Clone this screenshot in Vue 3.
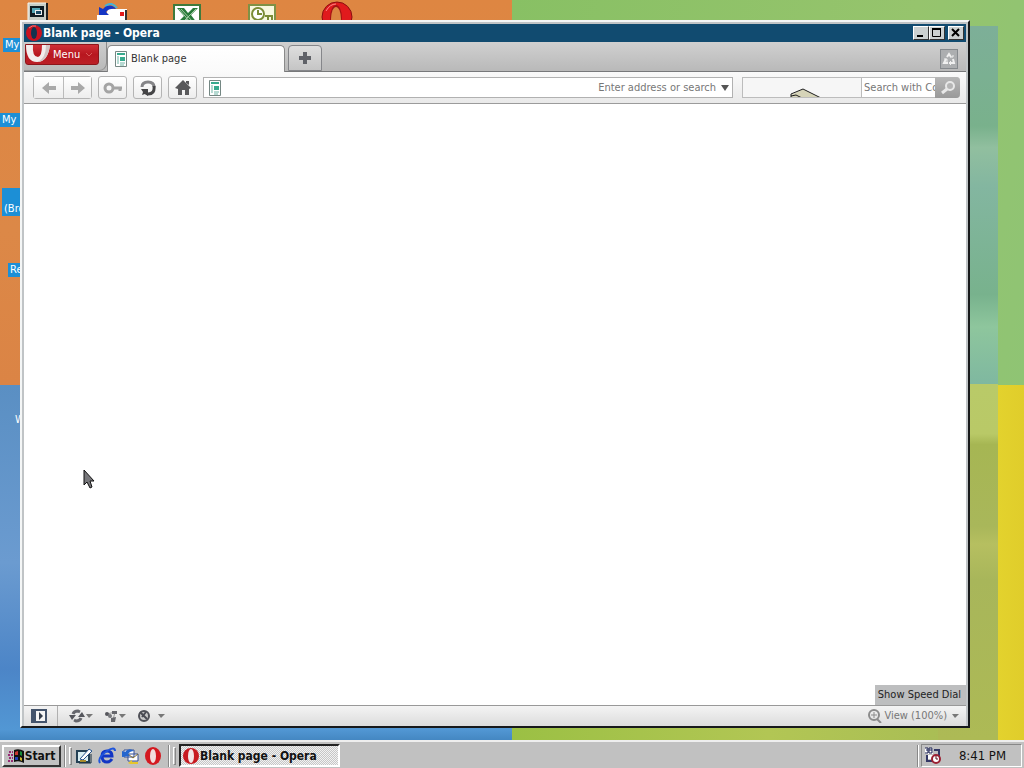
<script setup>
import { ref } from 'vue'

const address = ref('')
const query = ref('')
const shortcuts = [
  { id: 'computer', text: 'My', cls: 'lb-computer' },
  { id: 'network', text: 'My I', cls: 'lb-network' },
  { id: 'brother', text: '(Bro', cls: 'lb-brother' },
  { id: 'recycle', text: 'Rec', cls: 'lb-recycle' },
  { id: 'word', text: 'W', cls: 'lb-word' },
]
</script>

<template>
  <div class="screen">
    <main class="desktop">
      <div class="wallpaper" aria-hidden="true">
        <div class="orange"></div>
        <div class="green"></div>
        <div class="blue"></div>
        <div class="lime"></div>
      </div>
      <div class="shade" aria-hidden="true"><div class="teal"></div><div class="olive"></div></div>

      <svg class="dicon d1" width="22" height="22" viewBox="0 0 22 22">
        <path d="M1 1H19V18H1Z" fill="#c9cec6" /><path d="M1 18V1H19" fill="none" stroke="#f6f6ef" />
        <path d="M20 1V18" stroke="#222" stroke-width="2" /><path d="M3 4H17V15H3Z" fill="#101c22" />
        <path d="M5 6H13V11H5Z" fill="#54a6b5" /><path d="M8 8H15V13H8Z" fill="#eee" /><path d="M9 9H14V12H9Z" fill="#174a65" />
      </svg>
      <svg class="dicon d2" width="32" height="22" viewBox="0 0 32 22">
        <path d="M12 6H31V22H1V12H10Z" fill="#fff" /><path d="M30 7V22" stroke="#333" stroke-width="2" />
        <path d="M24 9H28V13H24Z" fill="#e21b1b" /><path d="M3 4V12H13L10 9Q13 5 20 6Q17 1 10 3L7 6Z" fill="#1535c4" />
        <path d="M9 3Q16-2 21 5" fill="none" stroke="#48b2d4" stroke-width="2" />
      </svg>
      <svg class="dicon d3" width="30" height="22" viewBox="0 0 30 22">
        <path d="M1 2H27V22H1Z" fill="#fff" stroke="#3f7a3c" stroke-width="2" />
        <path d="M4 5H11L15 10L20 5H25L18 12L24 20H17L14 16L10 20H4L11 13Z" fill="#277a38" />
        <path d="M6 6L17 19M8 6L20 19M23 6L10 19" stroke="#a3cba4" />
      </svg>
      <svg class="dicon d4" width="30" height="22" viewBox="0 0 30 22">
        <path d="M1 2H27V22H1Z" fill="#f8f8df" stroke="#7f9145" stroke-width="2" />
        <circle cx="10" cy="11" r="6" fill="#fff" stroke="#7b8c36" stroke-width="2" />
        <path d="M10 7V11H14M17 13H24V18H20V14" fill="none" stroke="#7b8c36" stroke-width="2" />
      </svg>
      <svg class="dicon d5" width="32" height="32" viewBox="0 0 32 32">
        <ellipse cx="16" cy="16" rx="15" ry="15" fill="#e01a1d" stroke="#8a1010" />
        <ellipse cx="15" cy="17" rx="6" ry="13" fill="#a31414" />
        <ellipse cx="15" cy="18" rx="5" ry="12" fill="#dc8642" />
        <path d="M5 10Q9 3 15 3" fill="none" stroke="#f88" />
      </svg>
      <span v-for="s in shortcuts" :key="s.id" class="label" :class="s.cls">{{ s.text }}</span>

      <section class="window" aria-label="Blank page - Opera">
        <header class="titlebar">
          <svg width="16" height="16" viewBox="0 0 16 16" aria-hidden="true">
            <circle cx="8" cy="8" r="8" fill="#c91320" /><path d="M3 3Q6 0 10 1" stroke="#f17b7b" fill="none" />
            <ellipse cx="8" cy="8" rx="3" ry="6" fill="#12334f" />
          </svg>
          <h1>Blank page - Opera</h1>
          <button class="cap" aria-label="Minimize"><svg width="12" height="10"><path d="M2 8H8" stroke="#000" stroke-width="2" /></svg></button>
          <button class="cap" aria-label="Maximize"><svg width="12" height="10"><path d="M1.500 1V8.500H9.500V1" stroke="#000" fill="none" /><path d="M1 1H10" stroke="#000" stroke-width="2" /></svg></button>
          <button class="cap close" aria-label="Close"><svg width="12" height="10"><path d="M2 1L9 8M9 1L2 8" stroke="#000" stroke-width="2" /></svg></button>
        </header>

        <nav class="tabs">
          <div class="menuwrap">
            <button class="menu">
              <svg width="25" height="18" viewBox="0 0 25 18" aria-hidden="true">
                <path d="M0 0Q0 17 11 17Q22 17 24 0H16Q16 11 12 12Q6 12 7 0Z" fill="#f3eded" />
                <path d="M20 0Q20 13 12 17Q22 16 24 0Z" fill="#d2c5c5" />
              </svg>
              <span>Menu</span>
              <svg width="8" height="6" viewBox="0 0 8 6" aria-hidden="true"><path d="M1 1L4 4L7 1" fill="none" stroke="#d95a5a" /></svg>
            </button>
          </div>
          <button class="tab">
            <svg width="12" height="16" viewBox="0 0 12 16" aria-hidden="true">
              <path d="M.5 .5H11.500V15.500H.5Z" fill="#fff" stroke="#748783" />
              <path d="M2 2H10V4H2ZM5 6H10V10H5Z" fill="#38aa8e" /><path d="M2 6H4M2 8H4M2 10H4M2 12H4M5 12H10M5 14H9" stroke="#6eb4a5" />
            </svg>
            <span>Blank page</span>
          </button>
          <button class="newtab" aria-label="New tab"><svg width="12" height="12"><path d="M6 0V12M0 6H12" stroke="#606268" stroke-width="4" /></svg></button>
          <button class="trash" aria-label="Closed tabs">
            <svg width="14" height="14" viewBox="0 0 14 14">
              <path d="M5 5L7 2L9 5M11 7L12 11H8M6 11H2L4 7" fill="none" stroke="#f0f0f0" stroke-width="2" />
              <path d="M8 5H11V3M9 9L7 11L9 13M2 7H5V10" fill="none" stroke="#f0f0f0" />
            </svg>
          </button>
        </nav>

        <div class="toolbar">
          <div class="pair">
            <button aria-label="Back"><svg width="16" height="14" viewBox="0 0 16 14"><path d="M1 7L8 1V5H15V9H8V13Z" fill="#a9a9a9" /></svg></button>
            <button aria-label="Forward"><svg width="16" height="14" viewBox="0 0 16 14"><path d="M15 7L8 1V5H1V9H8V13Z" fill="#a9a9a9" /></svg></button>
          </div>
          <button class="tool" aria-label="Wand"><svg width="20" height="12" viewBox="0 0 20 12"><circle cx="6" cy="6" r="4" fill="none" stroke="#a4a4a4" stroke-width="3" /><path d="M10 6H19M17 6V9" stroke="#a4a4a4" stroke-width="3" fill="none" /></svg></button>
          <button class="tool" aria-label="Reload"><svg width="16" height="16" viewBox="0 0 16 16"><path d="M2 7Q2 2 8 2Q14 2 14 7" fill="none" stroke="#858588" stroke-width="3" /><path d="M14 6Q15 14 8 14L6 13" fill="none" stroke="#444446" stroke-width="3" /><path d="M1 9H8V16L5 14L2 15L3 12Z" fill="#444446" /></svg></button>
          <button class="tool" aria-label="Home"><svg width="16" height="15" viewBox="0 0 16 15"><path d="M8 0L16 8L14 9V15H10V10H7V15H3V9L0 8Z" fill="#59595b" /><path d="M11 1H14V5L11 3Z" fill="#59595b" /></svg></button>
          <div class="address">
            <svg width="12" height="16" viewBox="0 0 12 16" aria-hidden="true">
              <path d="M.5 .5H11.500V15.500H.5Z" fill="#fff" stroke="#748783" />
              <path d="M2 2H10V4H2ZM5 6H10V10H5Z" fill="#38aa8e" /><path d="M2 6H4M2 8H4M2 10H4M2 12H4M5 12H10M5 14H9" stroke="#6eb4a5" />
            </svg>
            <input v-model="address" type="text" aria-label="Address" placeholder="Enter address or search">
            <button aria-label="Show address list"><svg width="8" height="6"><path d="M0 0H8L4 6Z" fill="#555" /></svg></button>
          </div>
          <div class="search">
            <div class="logo">
              <svg width="32" height="10" viewBox="0 0 32 10" aria-hidden="true"><path d="M1 7L13 1L31 10H1Z" fill="#d6d4b8" /><path d="M1 10V6L13 1L31 10M1 8L6 7L12 10" fill="none" stroke="#1c1c1c" /></svg>
            </div>
            <input v-model="query" type="text" aria-label="Web search" placeholder="Search with Co">
            <button aria-label="Search"><svg width="18" height="16" viewBox="0 0 18 16"><circle cx="11" cy="6" r="4" fill="#b5b5b5" stroke="#e8e8e8" stroke-width="2" /><path d="M8 9L3 13" stroke="#e8e8e8" stroke-width="3" /></svg></button>
          </div>
        </div>

        <div class="page"><div class="tip">Show Speed Dial</div></div>

        <footer class="status">
          <button class="panel" aria-label="Show panels"><svg width="16" height="14" viewBox="0 0 16 14"><path d="M1 1H15V13H1Z" fill="#f5f5f5" stroke="#44546c" stroke-width="2" /><path d="M1 1H5V13H1Z" fill="#44546c" /><path d="M8 3V11L12 7Z" fill="#333c4a" /></svg></button>
          <button class="sb" aria-label="Synchronize">
            <svg width="16" height="14" viewBox="0 0 16 14"><path d="M4 5Q5 2 9 2L11 3M12 9Q11 12 7 12L5 11" fill="none" stroke="#66676d" stroke-width="3" /><path d="M0 6H7L3 11ZM9 8H16L13 3Z" fill="#55565c" /></svg>
            <svg width="7" height="4"><path d="M0 0H7L3 4Z" fill="#777" /></svg>
          </button>
          <button class="sb" aria-label="Unite">
            <svg width="14" height="14" viewBox="0 0 14 14"><path d="M3 5L11 3M3 5L9 11M11 3L9 11" stroke="#999" /><circle cx="3" cy="5" r="2" fill="#55565c" /><path d="M8 2H13V5H8ZM7 9L12 8L11 13H7Z" fill="#66676d" /><circle cx="6" cy="7" r="2" fill="#77787c" /></svg>
            <svg width="7" height="4"><path d="M0 0H7L3 4Z" fill="#777" /></svg>
          </button>
          <button class="sb wide" aria-label="Turbo">
            <svg width="14" height="14" viewBox="0 0 14 14"><circle cx="7" cy="7" r="5" fill="#c8c8c8" stroke="#505158" stroke-width="2" /><path d="M3 3L10 10M9 3L5 8" stroke="#4b4c54" stroke-width="2" /></svg>
            <svg width="7" height="4"><path d="M0 0H7L3 4Z" fill="#777" /></svg>
          </button>
          <button class="view">
            <svg width="14" height="14" viewBox="0 0 14 14" aria-hidden="true"><circle cx="6" cy="6" r="5" fill="none" stroke="#8b8b8b" stroke-width="2" /><path d="M3 6H9M6 3V9" stroke="#8b8b8b" /><path d="M9 10L13 14" stroke="#8b8b8b" stroke-width="2" /></svg>
            <span>View (100%)</span>
            <svg width="7" height="4" aria-hidden="true"><path d="M0 0H7L3 4Z" fill="#777" /></svg>
          </button>
        </footer>
      </section>
      <svg class="cursor" width="12" height="21" viewBox="0 0 12 21" aria-hidden="true"><path d="M1 1V16L4 13L7 19L9 18L7 12H11Z" fill="#77777b" stroke="#111" /></svg>
    </main>

    <footer class="taskbar">
      <button class="start">
        <svg width="16" height="16" viewBox="0 0 16 16" aria-hidden="true">
          <path d="M6 2Q11 0 16 3V15Q11 12 6 14Z" fill="#111" /><path d="M7 4Q9 3 10 3V7H7Z" fill="#c83532" /><path d="M12 3L14 4V8L12 7Z" fill="#168b38" /><path d="M7 9H10V12H7Z" fill="#213fba" /><path d="M12 9L14 10V13L12 12Z" fill="#d1b72d" />
          <path d="M1 4H5M0 7H5M1 10H5M0 13H5" stroke="#982b75" stroke-width="2" stroke-dasharray="2 1" />
        </svg>
        <span>Start</span>
      </button>
      <i class="groove"></i><i class="grip"></i>
      <div class="quick">
        <button aria-label="Show Desktop"><svg width="16" height="16" viewBox="0 0 16 16"><path d="M1 3H13V14H1Z" fill="#d8edf2" stroke="#244155" stroke-width="2" /><path d="M4 11L13 1L16 3L7 12Z" fill="#fff" stroke="#24518a" /><path d="M4 13H10" stroke="#a78b2a" stroke-width="2" /><path d="M15 6V15H3" fill="none" stroke="#172d3d" /></svg></button>
        <button aria-label="Internet Explorer"><svg width="18" height="18" viewBox="0 0 18 18"><path d="M14 12Q12 15 9 15Q4 15 4 9Q4 4 9 4Q14 4 14 9H5" fill="none" stroke="#1236c4" stroke-width="3" /><path d="M2 16Q-1 11 9 4Q17-1 17 4" fill="none" stroke="#1f55dc" stroke-width="2" /></svg></button>
        <button aria-label="Outlook Express"><svg width="17" height="16" viewBox="0 0 17 16"><path d="M2 2H12V9H2ZM6 6H16V13H6Z" fill="#fff" stroke="#344f95" /><path d="M6 6L11 10L16 6" stroke="#86702b" fill="none" /><path d="M0 9V3L3 4Q7-1 12 3Q8 3 6 6L8 8Z" fill="#2466ce" /><path d="M6 15L10 12V14H16V16H8Z" fill="#e6c62e" /></svg></button>
        <button aria-label="Opera"><svg width="16" height="18" viewBox="0 0 16 18"><ellipse cx="8" cy="9" rx="8" ry="9" fill="#d41920" /><ellipse cx="8" cy="9" rx="3" ry="7" fill="#f1dddd" /></svg></button>
      </div>
      <i class="groove"></i><i class="grip"></i>
      <button class="task">
        <svg width="16" height="16" viewBox="0 0 16 16" aria-hidden="true"><circle cx="8" cy="8" r="8" fill="#c81a20" /><ellipse cx="8" cy="8" rx="3" ry="7" fill="#f3e6e6" /></svg>
        <span>Blank page - Opera</span>
      </button>
      <i class="groove traygroove"></i>
      <div class="tray">
        <svg width="18" height="18" viewBox="0 0 18 18" aria-hidden="true">
          <path d="M1 1H9V7H1Z" fill="#fff" /><path d="M1 1H4V6H1M2 3H4M5 1H8V6H5ZM5 3H8" stroke="#161d4f" fill="none" /><path d="M10 3H15V9M3 8V14H8" fill="none" stroke="#333866" stroke-width="2" /><path d="M4 8H9V12H4Z" fill="#fff" />
          <circle cx="12" cy="12" r="4" fill="#fff" stroke="#9b2032" stroke-width="2" /><path d="M12 9V12H14" fill="none" stroke="#54111d" />
        </svg>
        <time>8:41 PM</time>
      </div>
    </footer>
  </div>
</template>

<style>
body { margin: 0; }
</style>

<style scoped>
.screen, .screen * { box-sizing: border-box; }
.screen { min-height: 100vh; display: flex; flex-direction: column; overflow: hidden; font: 11px/14px "DejaVu Sans Condensed", "DejaVu Sans", sans-serif; color: #333; }
button, input { font: inherit; color: inherit; margin: 0; padding: 0; border: 0; background: none; border-radius: 0; min-width: 0; }
button { display: flex; align-items: center; justify-content: center; white-space: nowrap; }
svg { flex: none; display: block; }
.desktop { flex: 1; position: relative; overflow: hidden; }
.wallpaper { position: absolute; inset: 0; display: grid; grid-template: 52% 48% / 50% 50%; }
.orange { background: linear-gradient(#de8642, #dc8847 60%, #db8445); }
.green { background: linear-gradient(100deg, #88c064, #96c46d 70%, #8fc474); }
.blue { background: linear-gradient(#5a8fc3, #6b9bd0 50%, #4c85c7 80%, #5297d4 97%, #4487c2); }
.lime { background: linear-gradient(90deg, #9bc044, #b2c654 50%, #a7bb55 94%, #e3d22d 95%, #e0cd2b); }
.shade { position: absolute; top: 26px; right: 26px; bottom: 0; width: 60px; display: grid; grid-template-rows: 358px 1fr; }
.teal { background: linear-gradient(#7daf98, #79b18c 28%, #91bf9f 34%, #83b6a0 45%, #78b28d 75%, #8ec69d 84%, #7fb8a0); }
.olive { background: linear-gradient(#b9ca68, #b9c967 14%, #a6b653 17%, #a9b75a 40%, #b6bf60 45%, #a8b65a 55%, #adba55); }
.dicon { position: absolute; }
.d1 { left: 27px; top: 2px; }
.d2 { left: 96px; top: 3px; }
.d3 { left: 173px; top: 3px; }
.d4 { left: 248px; top: 3px; }
.d5 { left: 321px; top: 1px; }
.label { position: absolute; background: #1c8fd6; color: #fff; white-space: nowrap; width: 60px; padding-left: 2px; }
.lb-computer { left: 3px; top: 38px; }
.lb-network { left: 0; top: 113px; }
.lb-brother { left: 2px; top: 188px; padding-top: 14px; }
.lb-recycle { left: 8px; top: 263px; }
.lb-word { left: 15px; top: 413px; padding: 0; background: none; }

.window { position: absolute; top: 20px; right: 54px; bottom: 12px; left: 20px; display: flex; flex-direction: column; padding: 2px 2px 0; background: #c0c4c6; border: 2px solid; border-color: #f4f6f6 #17191b #17191b #f4f6f6; }
.titlebar { height: 18px; display: flex; align-items: center; background: #114b70; color: #fff; padding: 0 2px; }
.titlebar h1 { flex: 1; margin: 0 0 0 1px; font: bold 12px/16px "DejaVu Sans Condensed", sans-serif; white-space: nowrap; }
.cap { width: 16px; height: 14px; background: #ccd1d1; border: 1px solid; border-color: #fff #333 #333 #fff; }
.close { margin-left: 3px; }
.tabs { height: 30px; display: flex; align-items: flex-end; background: linear-gradient(#d0d0d0, #b9b9b9); border-bottom: 1px solid #77787a; }
.menuwrap { align-self: stretch; width: 83px; padding: 2px 0 0 1px; border-right: 1px solid #8b8b8b; border-bottom: 1px solid #999; border-bottom-right-radius: 8px; background: linear-gradient(#cdcdcd, #bababa); }
.menu { width: 74px; height: 21px; background: linear-gradient(#cf3037, #b8161f 50%, #bb2027); border: 1px solid #8d151b; border-radius: 0 0 3px 3px; color: #fff; justify-content: flex-start; gap: 2px; }
.menu > svg:first-child { align-self: flex-start; }
.menu > svg:last-child { margin-left: 3px; }
.tab { width: 178px; height: 27px; margin: 0 3px -1px 0; background: linear-gradient(#fff, #fafafa); border: 1px solid #8a8a8a; border-bottom: 0; border-radius: 5px 5px 0 0; justify-content: flex-start; padding-left: 7px; gap: 4px; }
.newtab { width: 34px; height: 26px; background: linear-gradient(#dedede, #c5c5c5); border: 1px solid #85868a; border-radius: 4px 4px 0 0; }
.trash { width: 18px; height: 20px; margin: 0 8px 2px auto; background: #acaeb0; border: 1px solid #85898d; }
.toolbar { height: 32px; display: flex; align-items: center; padding: 0 6px 0 9px; background: linear-gradient(#fafafa, #e9e9e9); border-bottom: 1px solid #9b9b9b; }
.pair { display: flex; border: 1px solid #b4b4b4; border-radius: 3px; margin-right: 6px; }
.pair button { width: 29px; height: 21px; background: linear-gradient(#fff, #ededed); }
.pair button + button { border-left: 1px solid #bbb; width: 28px; }
.tool { width: 29px; height: 23px; margin-right: 6px; background: linear-gradient(#fff, #ededed); border: 1px solid #b4b4b4; border-radius: 3px; }
.address { flex: 1; min-width: 0; height: 21px; display: flex; align-items: center; background: #fff; border: 1px solid #b1b1b1; padding: 0 3px 0 5px; margin-right: 9px; }
.address input { flex: 1; text-align: right; }
.address button { margin-left: 5px; height: 18px; }
input::placeholder { color: #777; opacity: 1; }
input { outline: 0; }
.search { width: 218px; height: 21px; display: flex; border: 1px solid #bcbcbc; border-right: 0; border-radius: 0 4px 4px 0; }
.logo { width: 118px; padding: 10px 0 0 47px; overflow: hidden; background: #f6f6f6; }
.search input { width: 74px; background: #fff; border-left: 1px solid #bcbcbc; padding-left: 2px; }
.search button { flex: 1; background: linear-gradient(#b7b7b7, #999); border-radius: 0 4px 4px 0; margin: -1px 0; }
.page { flex: 1; min-height: 0; display: flex; align-items: flex-end; justify-content: flex-end; background: #fff; }
.tip { background: #bdbebf; color: #222; padding: 3px 5px 3px 3px; height: 20px; }
.status { height: 21px; display: flex; align-items: center; border-top: 1px solid #999; background: linear-gradient(#f4f4f4, #dcdcdc); }
.panel { align-self: stretch; width: 34px; border-right: 1px solid #b0b0b0; padding-right: 4px; }
.sb { margin-left: 11px; gap: 1px; }
.wide { gap: 7px; }
.view { margin: 0 7px 0 auto; gap: 2px; color: #777; }
.view > svg:last-child { margin-left: 3px; }
.cursor { position: absolute; left: 83px; top: 469px; }

.taskbar { height: 28px; display: flex; align-items: center; background: #c1c1c1; border-top: 2px solid #eee; padding: 2px 2px 1px; color: #111; }
.start { width: 59px; height: 22px; border: 2px solid; border-color: #fff #333 #333 #fff; gap: 1px; font: bold 12px/16px "DejaVu Sans Condensed", sans-serif; }
.groove { flex: none; width: 2px; height: 22px; margin-left: 3px; border-left: 1px solid #888; border-right: 1px solid #fff; }
.grip { flex: none; width: 3px; height: 18px; margin-left: 3px; border: 1px solid; border-color: #fff #888 #888 #fff; }
.quick { display: flex; gap: 1px; margin: 0 1px; }
.quick button { width: 22px; height: 22px; }
.task { width: 161px; height: 23px; margin-left: 3px; border: 2px solid; border-color: #222 #fff #fff #222; justify-content: flex-start; padding-left: 2px; gap: 1px; background: repeating-conic-gradient(#f2f2f2 0 25%, #c6c6c6 0 50%) 0 0 / 2px 2px; font: bold 12px/16px "DejaVu Sans Condensed", sans-serif; }
.traygroove { margin-left: auto; }
.tray { width: 101px; height: 23px; margin-left: 2px; display: flex; align-items: center; justify-content: space-between; padding: 0 15px 0 2px; border: 1px solid; border-color: #888 #fff #fff #888; }
.tray time { font-size: 13px; white-space: nowrap; }
</style>
